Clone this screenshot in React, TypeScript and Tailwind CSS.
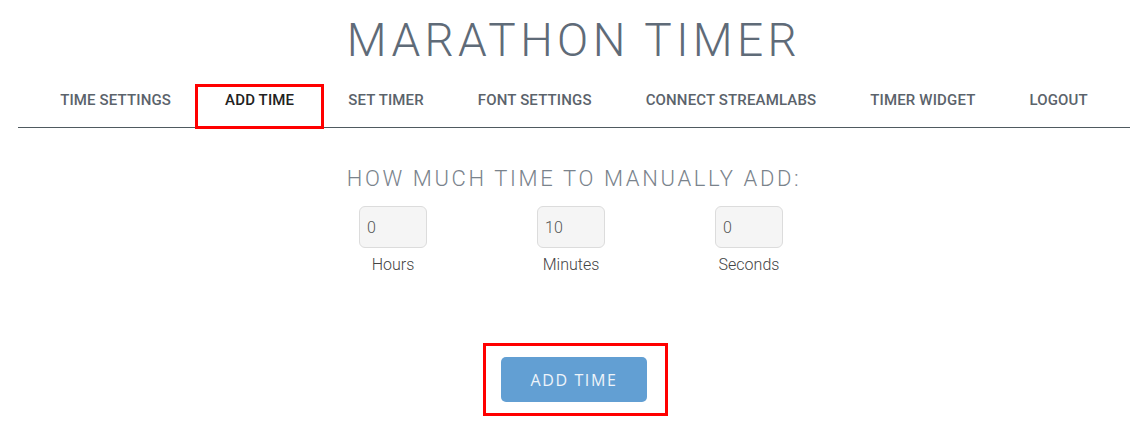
const navItems = [
  "TIME SETTINGS",
  "ADD TIME",
  "SET TIMER",
  "FONT SETTINGS",
  "CONNECT STREAMLABS",
  "TIMER WIDGET",
  "LOGOUT",
];

const fields = [
  { label: "Hours", value: "0" },
  { label: "Minutes", value: "10" },
  { label: "Seconds", value: "0" },
];

export default function App() {
  const active = "ADD TIME";

  return (
    <div
      className="min-h-screen w-full bg-white pl-[18px] pr-[10px]"
      style={{ fontFamily: "Roboto, 'Liberation Sans', sans-serif" }}
    >
      {/* Title */}
      <h1 className="pt-[13px] text-center text-[46px] leading-[54px] font-light tracking-[0.095em] text-[#5f6b78]">
        MARATHON TIMER
      </h1>

      {/* Nav */}
      <nav className="mt-[18px] h-[43px] border-b border-[#4f5a60]">
        <ul className="flex justify-center">
          {navItems.map((item) => (
            <li
              key={item}
              className={`relative h-[44px] px-[27px] pt-[5px] text-[15px] leading-[20px] font-medium tracking-[0.01em] ${
                item === active ? "text-[#222]" : "text-[#5b636b]"
              }`}
            >
              {item}
              {item === active && (
                <span className="absolute -left-[3px] -right-[3px] -top-[1px] bottom-0 border-[3px] border-[#ff0000]" />
              )}
            </li>
          ))}
        </ul>
      </nav>

      {/* Add time form */}
      <div className="flex flex-col items-center">
        <h2 className="mt-[38px] text-[22px] leading-[26px] font-light tracking-[0.12em] text-[#7a838c]">
          HOW MUCH TIME TO MANUALLY ADD:
        </h2>

        <div className="mt-[14px] mr-[6px] flex justify-center">
          {fields.map((f) => (
            <div key={f.label} className="flex w-[178px] flex-col items-center">
              <input
                readOnly
                value={f.value}
                className="h-[42px] w-[68px] rounded-[6px] border border-[#dcdcdc] bg-[#f5f5f5] px-[7px] text-[16px] font-light text-[#555] outline-none"
              />
              <span className="mt-[7px] text-[16px] leading-[20px] font-light text-[#444]">
                {f.label}
              </span>
            </div>
          ))}
        </div>

        <div className="relative mt-[82px]">
          <button
            type="button"
            className="h-[45px] w-[146px] rounded-[5px] bg-[#629fd3] text-[16px] tracking-[0.1em] text-[#eef4fa]"
            style={{ fontFamily: "'Open Sans', 'Liberation Sans', sans-serif" }}
          >
            ADD TIME
          </button>
          <span className="absolute -left-[18px] -right-[21px] -top-[14px] -bottom-[14px] border-[3px] border-[#ff0000]" />
        </div>
      </div>
    </div>
  );
}
